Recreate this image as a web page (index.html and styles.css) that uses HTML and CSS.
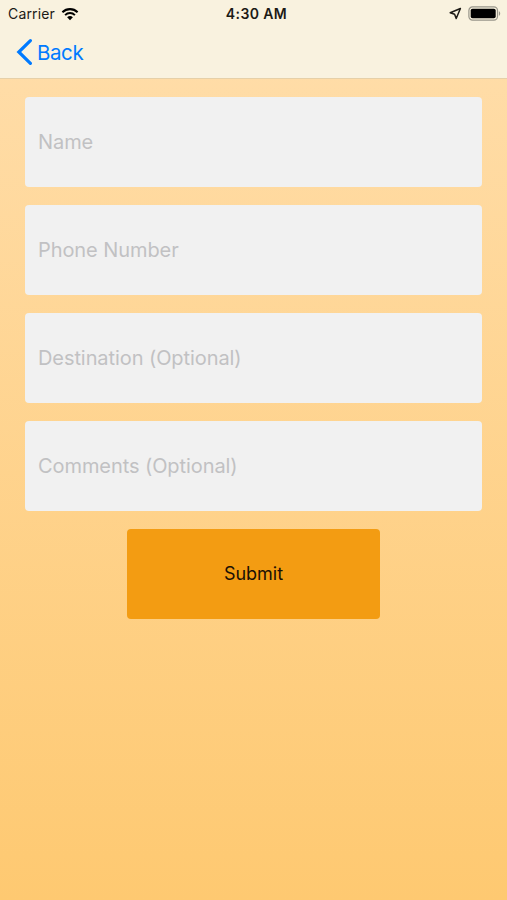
FILE: index.html
```
<!DOCTYPE html>
<html lang="en">
<head>
    <meta charset="UTF-8">
    <meta name="viewport" content="width=device-width, initial-scale=1.0">
    <title>Request</title>
    <link rel="stylesheet" href="styles.css">
</head>
<body>
    <header class="top">
        <div class="status-bar">
            <div class="status-left">
                <span class="carrier">Carrier</span>
                <svg class="wifi" width="18" height="14" viewBox="0 0 18 14">
                    <path d="M1.4 5.2 A11 11 0 0 1 16.6 5.2" fill="none" stroke="#000" stroke-width="2.1"/>
                    <path d="M4.1 8.1 A7 7 0 0 1 13.9 8.1" fill="none" stroke="#000" stroke-width="2"/>
                    <path d="M6.1 10.3 A4.2 4.2 0 0 1 11.9 10.3 L9 13.2 Z" fill="#000"/>
                </svg>
            </div>
            <span class="time">4:30 AM</span>
            <div class="status-right">
                <svg class="location" width="13" height="13" viewBox="0 0 13 13">
                    <path d="M11.4 1.5 L1.2 5.8 L5.6 7.2 L7.2 11.5 Z" fill="none" stroke="#1c1a16" stroke-width="1.5" stroke-linejoin="round"/>
                </svg>
                <svg class="battery" width="34" height="15" viewBox="0 0 34 15">
                    <rect x="0.9" y="0.9" width="28.6" height="13.2" rx="3.6" fill="none" stroke="#98958a" stroke-width="1.2"/>
                    <rect x="2.7" y="2.7" width="25" height="9.6" rx="1.8" fill="#000"/>
                    <path d="M30.9 5.2 C32.6 5.8 32.6 9.2 30.9 9.8 Z" fill="#98958a"/>
                </svg>
            </div>
        </div>
        <nav>
            <a href="#" class="back">
                <svg width="16" height="28" viewBox="0 0 16 28">
                    <path d="M14.4 2.6 L2.8 14 L14.4 25.4" fill="none" stroke="#007aff" stroke-width="3.2" stroke-linecap="round"/>
                </svg>
                <span>Back</span>
            </a>
        </nav>
    </header>

    <form class="request-form">
        <input type="text" class="name" placeholder="Name">
        <input type="tel" class="phone" placeholder="Phone Number">
        <input type="text" class="destination" placeholder="Destination (Optional)">
        <input type="text" class="comments" placeholder="Comments (Optional)">
        <button type="submit">Submit</button>
    </form>
</body>
</html>
```
FILE: styles.css
```
* {
    box-sizing: border-box;
}
body {
    margin: 0;
    height: 900px;
    overflow: hidden;
    font-family: Inter, 'Liberation Sans', sans-serif;
    background: linear-gradient(to bottom, #ffdeac, #fec971);
}
.top {
    height: 79px;
    background: #f9f2df;
    border-bottom: 1px solid #e6d0a8;
}
.status-bar {
    display: grid;
    grid-template-columns: 1fr auto 1fr;
    align-items: center;
    height: 27px;
    padding: 0 5px;
    font-size: 14px;
    color: #1c1a16;
}
.status-left,
.status-right {
    display: flex;
    align-items: center;
}
.status-left {
    gap: 6px;
    padding-left: 3px;
}
.status-right {
    justify-content: flex-end;
    gap: 6px;
}
.carrier {
    letter-spacing: 0.15px;
}
.time {
    padding-left: 6px;
    font-weight: 600;
    letter-spacing: 0.4px;
}
nav {
    display: flex;
    align-items: center;
    height: 50px;
    padding-left: 16px;
}
.back {
    display: flex;
    align-items: center;
    gap: 5px;
    color: #007aff;
    font-size: 20.5px;
    letter-spacing: -0.4px;
    text-decoration: none;
}
.request-form {
    display: flex;
    flex-direction: column;
    align-items: center;
    gap: 18px;
    padding: 18px 25px 0;
}
.request-form input {
    width: 100%;
    height: 90px;
    padding: 0 13px;
    border: none;
    border-radius: 4px;
    background: #f1f1f1;
    font-family: inherit;
    font-size: 20px;
    letter-spacing: -0.08px;
}
.request-form input::placeholder {
    color: #c1c1c3;
    opacity: 1;
}
.request-form button {
    width: 253px;
    height: 90px;
    padding-bottom: 3px;
    border: none;
    border-radius: 4px;
    background: #f39c12;
    color: #1a1005;
    font-family: inherit;
    font-size: 18px;
}
```
